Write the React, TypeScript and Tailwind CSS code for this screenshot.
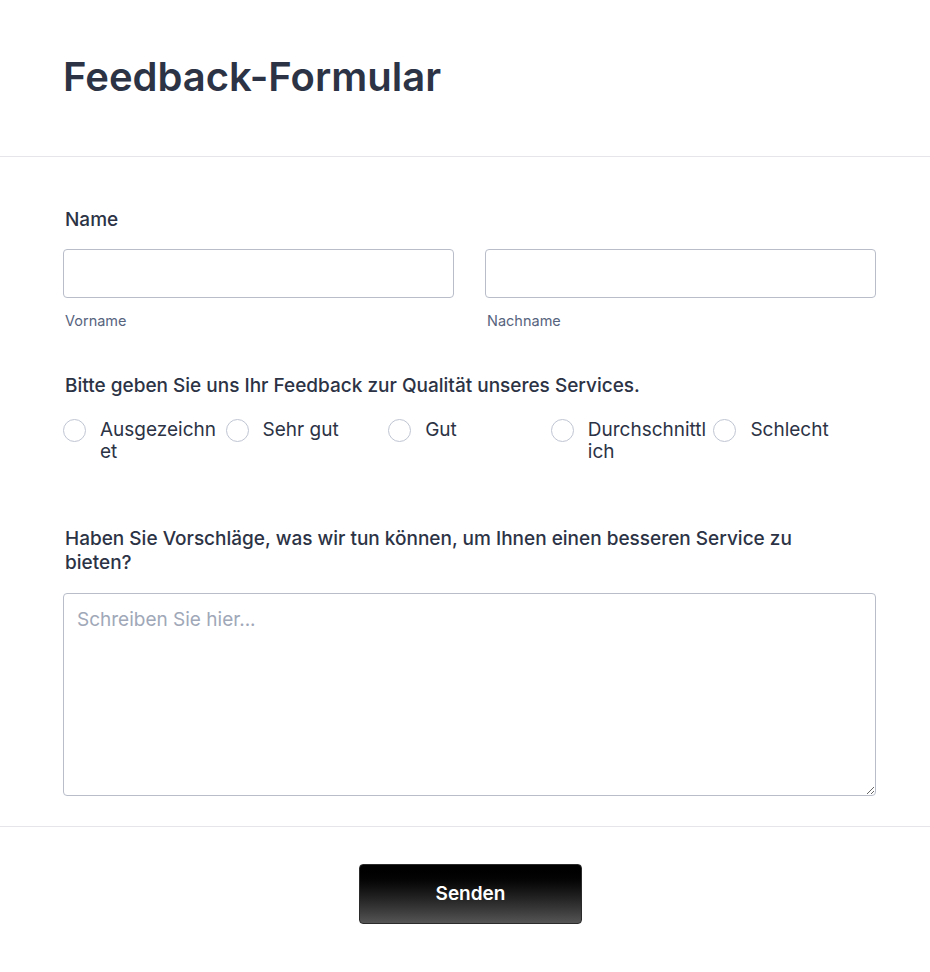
const OPTIONEN = ["Ausgezeichnet", "Sehr gut", "Gut", "Durchschnittlich", "Schlecht"];

export default function App() {
  return (
    <div className="min-h-[972px] bg-white font-['Inter','Noto_Sans',sans-serif] text-[#2c3345]">
      <div className="border-b border-[#e6e6ea] px-[63px] pt-[52px] pb-[55px]">
        <h1 className="text-[40px] font-semibold leading-[49px]">Feedback-Formular</h1>
      </div>

      <form className="px-[63px]">
        <div className="w-[813px] pt-[51px]">
          <label className="block pl-[2px] text-[19px] font-medium leading-[24px]">Name</label>
          <div className="mt-[17px] grid grid-cols-2 gap-[31px]">
            <div>
              <input className="block h-[49px] w-full rounded-[4px] border border-[#b8bdc9] px-3 outline-none" />
              <span className="mt-[14px] block pl-[2px] text-[14.5px] leading-[18px] text-[#57647e]">Vorname</span>
            </div>
            <div>
              <input className="block h-[49px] w-full rounded-[4px] border border-[#b8bdc9] px-3 outline-none" />
              <span className="mt-[14px] block pl-[2px] text-[14.5px] leading-[18px] text-[#57647e]">Nachname</span>
            </div>
          </div>

          <p className="mt-[44px] pl-[2px] text-[19px] font-medium leading-[24px]">
            Bitte geben Sie uns Ihr Feedback zur Qualität unseres Services.
          </p>
          <div className="mt-[21px] grid grid-cols-5">
            {OPTIONEN.map((o) => (
              <label key={o} className="flex items-start">
                <span className="h-[23px] w-[23px] shrink-0 rounded-full border border-[#bfc5d2] bg-white" />
                <span className="ml-[14px] w-[121px] break-all text-[19px] leading-[22px]">{o}</span>
              </label>
            ))}
          </div>

          <p className="mt-[64px] pl-[2px] pr-[20px] text-[19px] font-medium leading-[24px]">
            Haben Sie Vorschläge, was wir tun können, um Ihnen einen besseren Service zu bieten?
          </p>
          <textarea
            placeholder="Schreiben Sie hier..."
            className="mt-[18px] block h-[203px] w-full rounded-[4px] border border-[#b8bdc9] px-[13px] py-[14px] text-[19px] leading-[24px] outline-none placeholder:text-[#a0a8b8]"
          />
        </div>
      </form>

      <div className="mt-[30px] flex justify-center border-t border-[#e6e6ea] pt-[37px] pl-[11px]">
        <button className="h-[60px] w-[223px] rounded-[4px] border border-[#2b2b2b] bg-gradient-to-b from-[#000000] to-[#555555] text-[19px] font-semibold text-white">
          Senden
        </button>
      </div>
    </div>
  );
}
